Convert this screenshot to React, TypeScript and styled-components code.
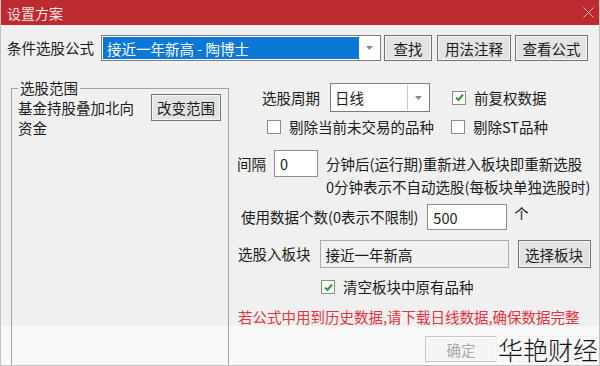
import React from "react";
import styled, { createGlobalStyle } from "styled-components";

const GlobalStyle = createGlobalStyle`
  html, body { margin: 0; padding: 0; background: #f0f0f0; }
  body { font-family: "Noto Sans CJK SC", "Noto Sans", sans-serif; }
`;

const Check: React.FC<{ checked?: boolean }> = ({ checked }) => (
  <CheckBox>
    {checked && (
      <svg width="11" height="11" viewBox="0 0 11 11">
        <path d="M2 5.5 L4.5 8 L9 2.5" fill="none" stroke="#2e9a36" strokeWidth="2" />
      </svg>
    )}
  </CheckBox>
);

const Arrow = () => (
  <svg width="7" height="4" viewBox="0 0 7 4">
    <path d="M0 0 H7 L3.5 4 Z" fill="#8a8a8a" />
  </svg>
);

const App: React.FC = () => {
  return (
    <Window>
      <GlobalStyle />
      <TitleBar>
        <span>设置方案</span>
        <svg width="11" height="11" viewBox="0 0 11 11">
          <path d="M0.5 0.5 L10.5 10.5 M10.5 0.5 L0.5 10.5" stroke="#f0b8b8" strokeWidth="1" />
        </svg>
      </TitleBar>

      <FormulaRow>
        <Label>条件选股公式</Label>
        <Combo $width={280}>
          <Selected>接近一年新高 - 陶博士</Selected>
          <DropButton>
            <Arrow />
          </DropButton>
        </Combo>
        <Button $width={48}>查找</Button>
        <Button $width={74}>用法注释</Button>
        <Button $width={73}>查看公式</Button>
      </FormulaRow>

      <Main>
        <GroupBox>
          <Legend>选股范围</Legend>
          <GroupContent>
            <ScopeText>基金持股叠加北向资金</ScopeText>
            <Button $width={70} $height={27} $lift={4}>改变范围</Button>
          </GroupContent>
        </GroupBox>

        <Settings>
          <Row $indent={32} $top={7} $h={29}>
            <Label>选股周期</Label>
            <Combo $width={100} $height={29} $ml={10}>
              <ComboText>日线</ComboText>
              <DropButton $divider>
                <Arrow />
              </DropButton>
            </Combo>
            <CheckLabel $ml={22}>
              <Check checked />
              <span>前复权数据</span>
            </CheckLabel>
          </Row>

          <Row $indent={37} $top={6} $h={18}>
            <CheckLabel>
              <Check />
              <span>剔除当前未交易的品种</span>
            </CheckLabel>
            <CheckLabel $ml={17}>
              <Check />
              <span>剔除ST品种</span>
            </CheckLabel>
          </Row>

          <Row $indent={7} $top={14} $h={27}>
            <Label>间隔</Label>
            <TextBox $width={44} $ml={8}>0</TextBox>
            <Label $ml={8}>分钟后(运行期)重新进入板块即重新选股</Label>
          </Row>

          <Row $indent={96} $top={1} $h={18}>
            <Label>0分钟表示不自动选股(每板块单独选股时)</Label>
          </Row>

          <Row $indent={11} $top={8} $h={26}>
            <Label>使用数据个数(0表示不限制)</Label>
            <TextBox $width={80} $ml={9}>500</TextBox>
            <Unit>个</Unit>
          </Row>

          <Row $indent={8} $top={10} $h={28}>
            <Label>选股入板块</Label>
            <TextBox $width={189} $ml={9} $readOnly>接近一年新高</TextBox>
            <Button $width={73} $height={28} $ml={9}>选择板块</Button>
          </Row>

          <Row $indent={91} $top={11} $h={16}>
            <CheckLabel>
              <Check checked />
              <span>清空板块中原有品种</span>
            </CheckLabel>
          </Row>

          <Row $indent={8} $top={12} $h={19}>
            <Warning>若公式中用到历史数据,请下载日线数据,确保数据完整</Warning>
          </Row>
        </Settings>

        <Footer>
          <Button $width={72} $disabled>确定</Button>
          <Button $width={74} $disabled $ml={21}>取消</Button>
          <Watermark>华艳财经</Watermark>
        </Footer>
      </Main>
    </Window>
  );
};

const Window = styled.div`
  position: relative;
  width: 600px;
  height: 366px;
  box-sizing: border-box;
  border: 1px solid #c2c2c2;
  border-top: none;
  overflow: hidden;
  background: #f0f0f0;
  color: #1b1b1b;
  font-size: 14.5px;
`;

const TitleBar = styled.div`
  display: flex;
  align-items: center;
  justify-content: space-between;
  height: 25px;
  margin: 0 -1px;
  padding: 0 6px 0 7px;
  background: #bd2b30;
  color: #f7e4e4;
  font-size: 14px;
`;

const FormulaRow = styled.div`
  display: flex;
  align-items: center;
  height: 26px;
  padding: 10px 0 15px 6px;
  & > button:nth-of-type(1) { margin-left: 3px; }
  & > button:nth-of-type(2) { margin-left: 5px; }
  & > button:nth-of-type(3) { margin-left: 4px; }
`;

const Label = styled.span<{ $ml?: number }>`
  margin-left: ${(p) => p.$ml ?? 0}px;
  white-space: nowrap;
  line-height: 18px;
`;

const Combo = styled.div<{ $width: number; $height?: number; $ml?: number }>`
  display: flex;
  box-sizing: border-box;
  width: ${(p) => p.$width}px;
  height: ${(p) => p.$height ?? 26}px;
  margin-left: ${(p) => p.$ml ?? 7}px;
  border: 1px solid #7e7e7e;
  background: #fff;
  padding: 1px;
`;

const Selected = styled.div`
  flex: 1;
  display: flex;
  align-items: center;
  padding-left: 4px;
  background: #0a78d4;
  color: #fff;
  white-space: nowrap;
`;

const ComboText = styled.div`
  flex: 1;
  display: flex;
  align-items: center;
  padding-left: 3px;
`;

const DropButton = styled.div<{ $divider?: boolean }>`
  display: flex;
  align-items: center;
  justify-content: center;
  width: 20px;
  border-left: ${(p) => (p.$divider ? "1px solid #c8c8c8" : "none")};
`;

const Button = styled.button<{
  $width: number;
  $height?: number;
  $ml?: number;
  $lift?: number;
  $disabled?: boolean;
}>`
  box-sizing: border-box;
  width: ${(p) => p.$width}px;
  height: ${(p) => p.$height ?? 26}px;
  margin: ${(p) => (p.$lift ? `-${p.$lift}px 0 0 0` : 0)};
  margin-left: ${(p) => p.$ml ?? 0}px;
  padding: 0;
  flex-shrink: 0;
  font-family: inherit;
  font-size: 14.5px;
  color: ${(p) => (p.$disabled ? "#a8a8a8" : "#1b1b1b")};
  background: ${(p) => (p.$disabled ? "#f5f5f5" : "#e3e3e3")};
  border: 1px solid ${(p) => (p.$disabled ? "#c6c6c6" : "#747474")};
  box-shadow: inset 0 0 0 1px ${(p) => (p.$disabled ? "#fbfbfb" : "#f6f6f6")};
  border-radius: 0;
`;

const Main = styled.div`
  display: grid;
  grid-template-columns: 229px 1fr;
  grid-template-rows: 250px 1fr;
  height: 289px;
  background: linear-gradient(to bottom, #f0f0f0 250px, #f9f9f9 250px);
`;

const GroupBox = styled.fieldset`
  grid-row: 1 / span 2;
  box-sizing: border-box;
  width: 218px;
  height: 300px;
  margin: 3px 0 0 10px;
  padding: 0 6px;
  border: 1px solid #a3a3a3;
  min-width: 0;
`;

const Legend = styled.legend`
  padding: 0 2px;
  margin-left: 0;
  line-height: 18px;
`;

const GroupContent = styled.div`
  display: flex;
  align-items: flex-start;
  gap: 5px;
  padding-top: 1px;
`;

const ScopeText = styled.div`
  width: 128px;
  line-height: 20px;
`;

const Settings = styled.div`
  display: flex;
  flex-direction: column;
`;

const Row = styled.div<{ $indent: number; $top: number; $h: number }>`
  display: flex;
  align-items: center;
  height: ${(p) => p.$h}px;
  margin-top: ${(p) => p.$top}px;
  padding-left: ${(p) => p.$indent}px;
  white-space: nowrap;
`;

const CheckLabel = styled.label<{ $ml?: number }>`
  display: flex;
  align-items: center;
  gap: 8px;
  margin-left: ${(p) => p.$ml ?? 0}px;
  line-height: 18px;
`;

const CheckBox = styled.span`
  display: inline-flex;
  align-items: center;
  justify-content: center;
  box-sizing: border-box;
  width: 14px;
  height: 14px;
  border: 1px solid #8c8c8c;
  background: #fff;
`;

const TextBox = styled.div<{ $width: number; $ml?: number; $readOnly?: boolean }>`
  display: flex;
  align-items: center;
  box-sizing: border-box;
  width: ${(p) => p.$width}px;
  height: 100%;
  margin-left: ${(p) => p.$ml ?? 0}px;
  padding-left: 5px;
  background: ${(p) => (p.$readOnly ? "#f0f0f0" : "#fff")};
  border: 1px solid ${(p) => (p.$readOnly ? "#acacac" : "#8e8e8e")};
`;

const Unit = styled.span`
  align-self: flex-start;
  margin-left: 7px;
  margin-top: -2px;
`;

const Warning = styled.span`
  color: #e8323c;
`;

const Footer = styled.div`
  position: relative;
  grid-column: 2;
  display: flex;
  align-items: flex-start;
  padding: 10px 0 0 195px;
`;

const Watermark = styled.span`
  position: absolute;
  right: 1px;
  top: 7px;
  padding-left: 2px;
  font-size: 25px;
  font-weight: 300;
  color: #111;
  line-height: 32px;
  background: rgba(249, 249, 249, 0.8);
`;

export default App;
